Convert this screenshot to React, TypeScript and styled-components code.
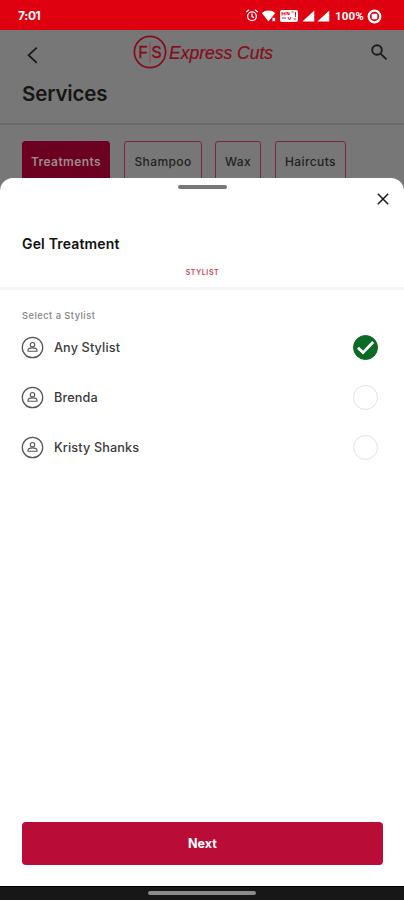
import React from "react";
import styled, { createGlobalStyle } from "styled-components";

const GlobalStyle = createGlobalStyle`
  * { box-sizing: border-box; }
  body { margin: 0; background: #fff; font-family: Inter, "Liberation Sans", sans-serif; }
  button { font: inherit; padding: 0; border: 0; background: none; color: inherit; }
  svg { display: block; }
`;

const Screen = styled.div`
  width: 404px;
  height: 900px;
  display: flex;
  flex-direction: column;
  overflow: hidden;
`;

const StatusBar = styled.header`
  height: 30px;
  flex: none;
  display: flex;
  align-items: center;
  justify-content: space-between;
  padding: 2px 22px 0 18px;
  background: #df0010;
  color: #fff;
`;

const Clock = styled.span`
  font-size: 12px;
  line-height: 16px;
  font-weight: 700;
  letter-spacing: -0.35px;
`;

const StatusIcons = styled.div`
  display: flex;
  align-items: center;
`;

const Battery = styled.span`
  font: 700 11.5px/16px Roboto, sans-serif;
  letter-spacing: 0.2px;
  margin: 0 3px 0 5px;
`;

const Backdrop = styled.section`
  height: 167px;
  flex: none;
  background: #777;
  color: #151515;
`;

const TopBar = styled.div`
  height: 45px;
  display: grid;
  grid-template-columns: 60px 1fr 60px;
  align-items: center;
  padding: 0 15px 0 22px;
`;

const Brand = styled.svg`
  justify-self: start;
  margin: 0 0 2px 50px;
`;

const IconButton = styled.button<{ $end?: boolean }>`
  justify-self: ${(p) => (p.$end ? "end" : "start")};
`;

const BackButton = styled(IconButton)`
  padding-top: 5px;
`;

const PageTitle = styled.h1`
  margin: 0;
  height: 50px;
  padding: 5px 22px 0;
  font-size: 20.5px;
  line-height: 28px;
  font-weight: 600;
  letter-spacing: -0.15px;
  border-bottom: 2px solid #6b6b6d;
`;

const Categories = styled.nav`
  display: flex;
  padding: 16px 22px 0;
`;

const Category = styled.button<{ $active?: boolean; $width: number; $gap: number }>`
  width: ${(p) => p.$width}px;
  margin-right: ${(p) => p.$gap}px;
  height: 40px;
  border: 1px solid ${(p) => (p.$active ? "#6c0020" : "#7d2440")};
  border-radius: 3px;
  background: ${(p) => (p.$active ? "#6c0020" : "transparent")};
  color: ${(p) => (p.$active ? "#9c8b90" : "#222")};
  font-size: 12px;
  font-weight: ${(p) => (p.$active ? 600 : 500)};
  letter-spacing: 0.4px;
  white-space: nowrap;
`;

const Sheet = styled.main`
  flex: 1;
  margin-top: -19px;
  min-height: 0;
  z-index: 1;
  display: flex;
  flex-direction: column;
  background: #fff;
  border-radius: 13px 13px 0 0;
`;

const Handle = styled.div`
  width: 49px;
  height: 4px;
  margin: 7px auto 0;
  border-radius: 2px;
  background: #777;
`;

const CloseRow = styled.div`
  display: flex;
  justify-content: flex-end;
  padding: 3px 14px 0 0;
`;

const SheetTitle = styled.h2`
  margin: 28px 22px 0;
  font-size: 14px;
  line-height: 20px;
  font-weight: 600;
  letter-spacing: 0.17px;
  color: #111;
`;

const StepTab = styled.div`
  height: 36px;
  padding: 14px 0 0 1px;
  text-align: center;
  font-size: 7px;
  line-height: 10px;
  font-weight: 600;
  letter-spacing: 0.62px;
  color: #cf4054;
  border-bottom: 3px solid #f5f5f5;
`;

const ListLabel = styled.p`
  margin: 19px 22px 0;
  font-size: 9.3px;
  line-height: 14px;
  font-weight: 500;
  letter-spacing: 0.48px;
  color: #858585;
`;

const StylistRow = styled.button`
  width: 100%;
  height: 50px;
  display: flex;
  align-items: center;
  padding: 0 26px 0 21px;
  text-align: left;
`;

const StylistList = styled.div`
  display: flex;
  flex-direction: column;
  margin-top: -1px;
`;

const StylistName = styled.span`
  flex: 1;
  margin-left: 10px;
  padding-top: 2px;
  font-size: 12.7px;
  line-height: 18px;
  font-weight: 500;
  letter-spacing: 0.12px;
  color: #3a3a3a;
`;

const Radio = styled.span<{ $checked: boolean }>`
  width: 25px;
  height: 25px;
  border-radius: 50%;
  border: 1.5px solid ${(p) => (p.$checked ? "#0b6b25" : "#e2e2e2")};
  background: ${(p) => (p.$checked ? "#0b6b25" : "#fff")};
  display: grid;
  place-items: center;
`;

const NextButton = styled.button`
  height: 43px;
  margin: auto 21px 21px 22px;
  border-radius: 4px;
  background: #b90c36;
  color: #fff;
  font-size: 12.5px;
  font-weight: 700;
  letter-spacing: 0.1px;
`;

const GestureBar = styled.footer`
  height: 14px;
  flex: none;
  background: #171717;
  border-top: 1px solid #000;
  padding-top: 4px;
`;

const GesturePill = styled.div`
  width: 108px;
  height: 4px;
  margin: 0 auto;
  border-radius: 2px;
  background: #8b8b8b;
`;

const StatusGlyphs = () => (
  <svg width="86" height="16" viewBox="0 0 86 16" fill="none">
    <g stroke="#fff" strokeWidth="1.3">
      <circle cx="8" cy="8.3" r="4.4" />
      <path d="M2.2 4.1 5 1.8M13.8 4.1 11 1.8M8 5.6v3l2 1" />
    </g>
    <path d="M17.8 5C21.4 1.7 27.7 1.7 31.3 5L24.5 13.5Z" fill="#fff" />
    <path d="M28.5 9.5h3v4h-3" fill="#fff" stroke="#df0010" strokeWidth=".7" />
    <rect x="36" y="2" width="18" height="12" rx="2" fill="#fff" />
    <path d="M38 4v3.5M38 5.8h3M41 4v3.5M43 7V4l2 3V4M47.5 4h2M51.5 4v5M38 10h4M44 9l1.5 3L47 9M49.5 11h2.5" stroke="#df0010" strokeWidth=".9" />
    <path d="M70.3 2.5v11H58.3ZM85.3 2.5v11H73.3Z" fill="#fff" />
  </svg>
);

const BatteryRing = () => (
  <svg width="15" height="15" viewBox="0 0 15 15" fill="none">
    <circle cx="7.5" cy="7.5" r="5.8" stroke="#fff" strokeWidth="2.2" />
    <rect x="4.7" y="4.7" width="5.6" height="5.6" rx="1.3" fill="#fff" />
  </svg>
);

const PersonIcon = () => (
  <svg width="23" height="23" viewBox="0 0 23 23" fill="none" stroke="#555">
    <circle cx="11.5" cy="11.5" r="10.2" strokeWidth="1.25" />
    <circle cx="11.5" cy="8.7" r="2.2" strokeWidth="1.1" />
    <path d="M7 15.3v-1c0-1.5 2.5-2.4 4.5-2.4s4.5.9 4.5 2.4v1Z" strokeWidth="1.1" />
  </svg>
);

const categories = [
  { name: "Treatments", width: 88, gap: 14 },
  { name: "Shampoo", width: 78, gap: 13 },
  { name: "Wax", width: 46, gap: 14 },
  { name: "Haircuts", width: 71, gap: 0 },
];

const stylists = ["Any Stylist", "Brenda", "Kristy Shanks"];

export default function App() {
  const [selected, setSelected] = React.useState(stylists[0]);

  return (
    <Screen>
      <GlobalStyle />
      <StatusBar>
        <Clock>7:01</Clock>
        <StatusIcons>
          <StatusGlyphs />
          <Battery>100%</Battery>
          <BatteryRing />
        </StatusIcons>
      </StatusBar>
      <Backdrop>
        <TopBar>
          <BackButton aria-label="Back">
            <svg width="20" height="20" viewBox="0 0 20 20" fill="none" stroke="#181818" strokeWidth="1.8">
              <path d="M14.8 2.6 6.6 10.2l8.2 7.7" />
            </svg>
          </BackButton>
          <Brand width="144" height="36" viewBox="0 0 144 36">
            <circle cx="18" cy="18" r="15.6" fill="none" stroke="#850c1c" strokeWidth="1.7" />
            <path d="M18 8v21" stroke="#8e4850" strokeWidth="1" />
            <g fill="#850c1c" fontFamily="Liberation Sans, sans-serif">
              <text x="6.6" y="24" fontSize="16.5" textLength="9" lengthAdjust="spacingAndGlyphs" stroke="#850c1c" strokeWidth=".5">F</text>
              <text x="19.6" y="24" fontSize="16.5" textLength="10" lengthAdjust="spacingAndGlyphs" stroke="#850c1c" strokeWidth=".5">S</text>
              <text x="37" y="24.5" fontSize="17.5" fontStyle="italic" textLength="104" stroke="#850c1c" strokeWidth=".2">
                Express Cuts
              </text>
            </g>
          </Brand>
          <IconButton $end aria-label="Search">
            <svg width="20" height="20" viewBox="0 0 20 20" fill="none" stroke="#1c1c1c" strokeWidth="1.9">
              <circle cx="8" cy="7" r="4.8" />
              <path d="m11.5 10.6 6 5.8" />
            </svg>
          </IconButton>
        </TopBar>
        <PageTitle>Services</PageTitle>
        <Categories>
          {categories.map((c, i) => (
            <Category key={c.name} $active={i === 0} $width={c.width} $gap={c.gap}>
              {c.name}
            </Category>
          ))}
        </Categories>
      </Backdrop>
      <Sheet>
        <Handle />
        <CloseRow>
          <IconButton aria-label="Close">
            <svg width="14" height="14" viewBox="0 0 14 14" stroke="#181818" strokeWidth="1.5">
              <path d="m1.8 1.8 10.4 10.4M12.2 1.8 1.8 12.2" />
            </svg>
          </IconButton>
        </CloseRow>
        <SheetTitle>Gel Treatment</SheetTitle>
        <StepTab>STYLIST</StepTab>
        <ListLabel>Select a Stylist</ListLabel>
        <StylistList>
          {stylists.map((name) => (
            <StylistRow key={name} onClick={() => setSelected(name)}>
              <PersonIcon />
              <StylistName>{name}</StylistName>
              <Radio $checked={name === selected}>
                {name === selected && (
                  <svg width="21" height="21" viewBox="0 0 21 21" fill="none" stroke="#fff" strokeWidth="2.8">
                    <path d="m3 10.8 5 4.8L18.2 5" />
                  </svg>
                )}
              </Radio>
            </StylistRow>
          ))}
        </StylistList>
        <NextButton>Next</NextButton>
      </Sheet>
      <GestureBar>
        <GesturePill />
      </GestureBar>
    </Screen>
  );
}
